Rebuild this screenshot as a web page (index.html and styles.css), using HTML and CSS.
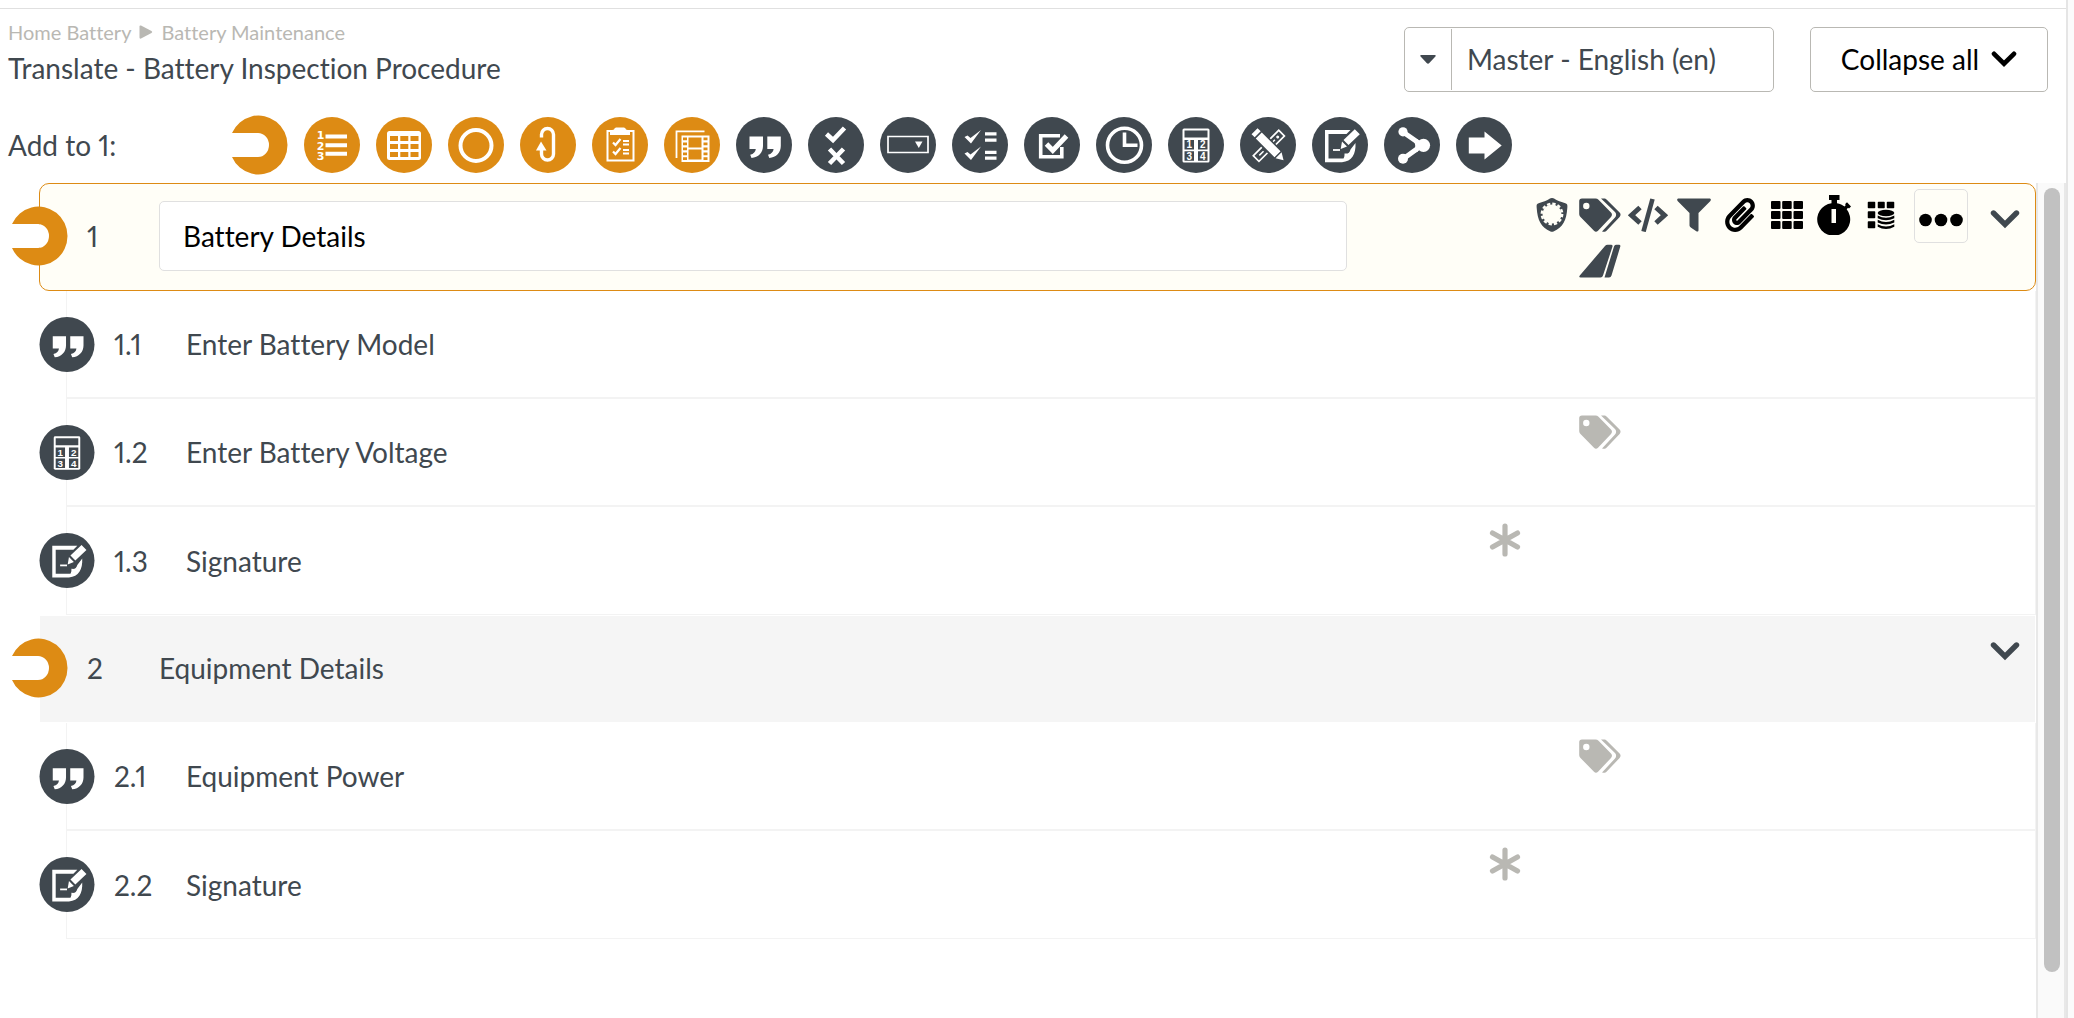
FILE: index.html
```html
<!DOCTYPE html>
<html lang="en">
<head>
<meta charset="utf-8">
<meta name="viewport" content="width=device-width, initial-scale=1">
<title>Translate - Battery Inspection Procedure</title>
<link rel="stylesheet" href="styles.css">
</head>
<body>
<svg class="sprite" aria-hidden="true">
  <symbol id="hook" viewBox="0 0 56 60">
    <path fill="#fff" d="M0 18H26a11 12 0 0 1 0 24H0z"/>
    <path fill="#dd8b14" d="M0 18A29 29.500 0 1 1 0 42H26a11 12 0 0 0 0-24z"/>
  </symbol>
  <symbol id="numbered" viewBox="0 0 56 56">
    <circle cx="28" cy="28" r="28" fill="#dd8b14"/>
    <g fill="#fff"><path d="M21.500 17.500h21.500v4H21.500zM21.500 26.200h21.500v4H21.500zM21.500 34.800h21.500v4H21.500z"/>
    <g font-family="DejaVu Sans" font-weight="700" font-size="11" text-anchor="middle"><text x="16.500" y="22">1</text><text x="16.500" y="32.500">2</text><text x="16.500" y="43">3</text></g></g>
  </symbol>
  <symbol id="table" viewBox="0 0 56 56">
    <circle cx="28" cy="28" r="28" fill="#dd8b14"/>
    <rect x="11" y="14" width="34" height="29" rx="2.500" fill="#fff"/>
    <path fill="#dd8b14" d="M14 19h8v5h-8zM24.300 19h8v5h-8zM34.500 19h8v5h-8zM14 27h8v5h-8zM24.300 27h8v5h-8zM34.500 27h8v5h-8zM14 35h8v5h-8zM24.300 35h8v5h-8zM34.500 35h8v5h-8z"/>
  </symbol>
  <symbol id="ring" viewBox="0 0 56 56">
    <circle cx="28" cy="28" r="28" fill="#dd8b14"/>
    <circle cx="28" cy="28.500" r="15.500" fill="none" stroke="#fff" stroke-width="4"/>
  </symbol>
  <symbol id="loop" viewBox="0 0 56 56">
    <circle cx="28" cy="28" r="28" fill="#dd8b14"/>
    <path fill="none" stroke="#fff" stroke-width="3.400" d="M21.500 20.500V17.500a6 6 0 0 1 12 0V37a6 6 0 0 1-12 0V32"/>
    <path fill="#fff" d="M16 33.500l5-9 5.500 9z"/>
  </symbol>
  <symbol id="clipboard" viewBox="0 0 56 56">
    <circle cx="28" cy="28" r="28" fill="#dd8b14"/>
    <path fill="none" stroke="#fff" stroke-width="2" d="M15.500 14h26v29.500h-26z"/>
    <path fill="#fff" d="M18 18v-4.500c1.500-.5 3-.5 4-1 .5-1.500 1.500-2 3-2h6c1.500 0 2.500.5 3 2 1 .5 2.500.5 4 1V18z"/>
    <path fill="none" stroke="#fff" stroke-width="2.200" d="M21 25.500l2.500 2.500 5-6M21 34.500l2.500 2.500 5-6"/>
    <path stroke="#fff" stroke-width="1.800" d="M31 24h6M31 27.500h6M31 33h6M31 36.500h6"/>
  </symbol>
  <symbol id="film" viewBox="0 0 56 56">
    <circle cx="28" cy="28" r="28" fill="#dd8b14"/>
    <path fill="none" stroke="#fff" stroke-width="1.800" d="M12.500 41V14.300H40.500"/>
    <path fill="#fff" d="M17.500 18.500h28V45h-28z"/>
    <path fill="#dd8b14" d="M24.500 20.500h13v10h-13zM24.500 32.500h13v10h-13zM19 20.500h4v2.800h-4zM19 25.500h4v2.800h-4zM19 30.500h4v2.800h-4zM19 35.500h4v2.800h-4zM19 40.300h4v2.800h-4zM39.500 20.500h4v2.800h-4zM39.500 25.500h4v2.800h-4zM39.500 30.500h4v2.800h-4zM39.500 35.500h4v2.800h-4zM39.500 40.300h4v2.800h-4z"/>
  </symbol>
  <symbol id="quote" viewBox="0 0 56 56">
    <circle cx="28" cy="28" r="28" fill="#40484f"/>
    <path fill="#fff" d="M13.500 19.500H27V29c0 6.500-4.500 11.500-11.500 12l-1.300-3.300c3.500-.7 5.300-3 5.600-5.700H13.500zM31.300 19.500h13.500V29c0 6.500-4.500 11.500-11.500 12L32 37.700c3.500-.7 5.300-3 5.600-5.700H31.300z"/>
  </symbol>
  <symbol id="yesno" viewBox="0 0 56 56">
    <circle cx="28" cy="28" r="28" fill="#40484f"/>
    <path fill="none" stroke="#fff" stroke-width="4.600" d="M18.500 17l6.500 6L36.500 11M21.500 32L35.500 46.500M35.500 32L21.500 46.500"/>
  </symbol>
  <symbol id="dropdown" viewBox="0 0 56 56">
    <circle cx="28" cy="28" r="28" fill="#40484f"/>
    <path fill="none" stroke="#fff" stroke-width="1.700" d="M8 19.500h40v16H8z"/>
    <path fill="#fff" d="M35 24.500h7.500L38.800 31z"/>
  </symbol>
  <symbol id="checklist" viewBox="0 0 56 56">
    <circle cx="28" cy="28" r="28" fill="#40484f"/>
    <path fill="#fff" d="M12.500 20l3-1.500 3 2.500L29 13 19 26.500zM12.500 36.500l3-1.500 3 2.500L29 29.500 19 43z"/>
    <path fill="#fff" d="M33 15.300h11.500v3.200H33zM33 21.500h11.500v3.200H33zM33 33.700h11.500v3.200H33zM33 39.500h11.500v3.200H33z"/>
  </symbol>
  <symbol id="checkbox" viewBox="0 0 56 56">
    <circle cx="28" cy="28" r="28" fill="#40484f"/>
    <path fill="none" stroke="#fff" stroke-width="3.600" d="M36 18.700H16.700V39.700H37.800V30"/>
    <path fill="none" stroke="#fff" stroke-width="5" d="M22.500 27l6.300 6.500L42.500 19"/>
  </symbol>
  <symbol id="clock" viewBox="0 0 56 56">
    <circle cx="28" cy="28" r="28" fill="#40484f"/>
    <circle cx="28.500" cy="28.300" r="17" fill="none" stroke="#fff" stroke-width="3.600"/>
    <path fill="none" stroke="#fff" stroke-width="3.600" d="M28.500 15.500V28.300H41.500"/>
  </symbol>
  <symbol id="calc" viewBox="0 0 56 56">
    <circle cx="28" cy="28" r="28" fill="#40484f"/>
    <rect x="14.500" y="11.500" width="27" height="34" rx="1.500" fill="#fff"/>
    <path fill="#40484f" d="M16.500 13.500h23v7h-23zM16.500 23h9.500v9.500h-9.500zM30 23h9.500v9.500H30zM16.500 34.200h9.500v9.500h-9.500zM30 34.200h9.500v9.500H30z"/>
    <g fill="#fff" font-family="Liberation Sans" font-weight="700" font-size="10" text-anchor="middle"><text x="21.200" y="31.400">1</text><text x="34.800" y="31.400">2</text><text x="21.200" y="42.600">3</text><text x="34.800" y="42.600">4</text></g>
  </symbol>
  <symbol id="tools" viewBox="0 0 56 56">
    <circle cx="28" cy="28" r="28" fill="#40484f"/>
    <g transform="rotate(45 28.500 28.500)">
      <path fill="none" stroke="#fff" stroke-width="1.700" d="M25 10.500h8v36h-8z"/>
      <circle cx="29" cy="16" r="1.500" fill="#fff"/>
      <path stroke="#fff" stroke-width="1.500" d="M29 20v3M29 36v6"/>
    </g>
    <g transform="rotate(-45 28.500 28.500)">
      <path fill="#40484f" d="M22.500 9h12v38l-6 5-6-5z"/>
      <path fill="#fff" d="M24.500 8.500h8.500v4.500h-8.500zM24.500 14.500h8.500V41h-8.500zM24.500 42.500h8.500l-4.200 7z"/>
    </g>
  </symbol>
  <symbol id="sign" viewBox="0 0 56 56">
    <circle cx="28" cy="28" r="28" fill="#40484f"/>
    <path fill="#fff" fill-rule="evenodd" d="M13 13H38.500L34.500 17H16.500V41.500H31.500c1-1.500 1-3 1-5 3.500.5 5-.5 6-4L43.500 26C44 37 40 44.500 30 45.200H13z"/>
    <path fill="#fff" d="M42.800 12.200l5 5L36.500 28l-5-5zM30 24.500l5 5-6.300 2.500z"/>
    <path stroke="#fff" stroke-width="1.800" d="M21 33h7"/>
  </symbol>
  <symbol id="branch" viewBox="0 0 56 56">
    <circle cx="28" cy="28" r="28" fill="#40484f"/>
    <path fill="none" stroke="#fff" stroke-width="5" d="M19 15L38 28.300 19 42"/>
    <path fill="#fff" d="M26 20l8 2.500v12L26 37.500c7-6 7-11 0-17.500z"/>
    <g fill="#fff"><circle cx="19" cy="14.800" r="4.600"/><circle cx="19" cy="41.800" r="5"/><circle cx="39.500" cy="28.300" r="6.600"/></g>
  </symbol>
  <symbol id="goto" viewBox="0 0 56 56">
    <circle cx="28" cy="28" r="28" fill="#40484f"/>
    <path fill="#fff" d="M12.800 20.500h15.700v-6L45.700 28.500 28.500 42.500v-6H12.800z"/>
  </symbol>

  <symbol id="shield" viewBox="0 0 32 34">
    <path fill="#40484f" d="M16 0c2 0 3 1.500 5 2.300 3 1.400 6.500 2 9 3.200 1.500.8 1.500 2 1.300 4.500C30.500 22 27 29.500 17.500 33.500q-1.500.6-3 0C5 29.500 1.500 22 .7 10 .5 7.500.5 6.300 2 5.500c2.500-1.200 6-1.800 9-3.200C13 1.500 14 0 16 0z"/>
    <circle cx="16" cy="16" r="9.500" fill="#fffef7"/>
    <circle cx="16" cy="16" r="10.200" fill="none" stroke="#fffef7" stroke-width="2.400" stroke-dasharray="3.300 2.040"/>
  </symbol>
  <symbol id="tags" viewBox="0 0 42 34">
    <path fill="currentColor" fill-rule="evenodd" d="M3 0.500H16.500c1.200 0 2.200.4 3 1.200L32 14.600c1.300 1.400 1.300 3 0 4.400L19 32.700c-1.300 1.300-2.700 1.300-4 0L1.500 19C.6 18 .2 17 .2 15.800V3.300A2.800 2.800 0 0 1 3 .5zM7.300 4.800a3.200 3.200 0 1 0 0 6.400 3.200 3.200 0 0 0 0-6.400z"/>
    <path fill="currentColor" d="M22 .5h3c1.200 0 2 .4 2.800 1.200L40.600 14.600c1.300 1.400 1.300 3 0 4.400L27.500 32.700c-1 1-2 1.200-4.500.8L36 19.500c1.500-1.700 1.500-3.800 0-5.500z"/>
  </symbol>
  <symbol id="code" viewBox="0 0 42 34">
    <path fill="none" stroke="#40484f" stroke-width="5" d="M13 9.500L4.500 17.200 13 25M29 9.500L37.500 17.200 29 25"/>
    <path stroke="#40484f" stroke-width="4.600" d="M25.500 1L16.500 33.500"/>
  </symbol>
  <symbol id="filter" viewBox="0 0 34 34">
    <path fill="#40484f" d="M1.500.5h31c1.300 0 1.800 1.500.9 2.400L21.500 15v17c0 1.500-1 2-2.200 1.200l-5.500-3.700c-.8-.6-1.300-1.200-1.300-2V15L.6 2.900C-.3 2 .2.500 1.500.5z"/>
  </symbol>
  <symbol id="clip" viewBox="0 0 448 512">
    <path d="M43.246 466.142c-58.430-60.289-57.341-157.511 1.386-217.581L254.392 34c44.316-45.332 116.351-45.336 160.671 0 43.890 44.894 43.943 117.329 0 162.276L232.214 383.128c-29.855 30.537-78.633 30.111-107.982-.998-28.275-29.970-27.368-77.473 1.452-106.953l143.743-146.835c6.182-6.314 16.312-6.422 22.626-.241l22.861 22.379c6.315 6.182 6.422 16.312.241 22.626L171.427 319.927c-4.932 5.045-5.236 13.428-.648 18.292 4.372 4.634 11.245 4.711 15.688.165l182.849-186.851c19.613-20.062 19.613-52.725-.011-72.798-19.189-19.627-49.957-19.637-69.154 0L90.390 293.295c-34.763 35.560-35.299 93.120-1.191 128.313 34.010 35.093 88.985 35.137 123.058.286l172.060-175.999c6.177-6.319 16.307-6.433 22.626-.256l22.877 22.364c6.319 6.177 6.434 16.307.256 22.626l-172.060 175.998c-59.576 60.938-155.943 60.216-214.770-.485z"/>
  </symbol>
  <symbol id="grid" viewBox="0 0 34 30">
    <path stroke="#000" stroke-width="2" stroke-linejoin="round" d="M2 2h7.500v6H2zM13.200 2h7.500v6h-7.500zM24.500 2h7.500v6h-7.500zM2 12h7.500v6H2zM13.200 12h7.500v6h-7.500zM24.500 12h7.500v6h-7.500zM2 22h7.500v6H2zM13.200 22h7.500v6h-7.500zM24.500 22h7.500v6h-7.500z"/>
  </symbol>
  <symbol id="stopwatch" viewBox="0 0 34 40">
    <path fill-rule="evenodd" d="M12 0h10.500v5H20v3.200c3 .5 5.500 1.600 7.500 3.300l1.300-1.400-.8-.8 2-2L34 11.500l-2 2-1-.7-1.300 1.500A16.500 16.300 0 1 1 14.500 8.200V5H12zM14.500 14v14h4.500V14z"/>
  </symbol>
  <symbol id="griddata" viewBox="0 0 28 28">
    <path stroke="#000" stroke-width="1.500" stroke-linejoin="round" d="M1.500 1.500h6v5h-6zM11.500 1.500h5.500v5h-5.500zM20.500 1.500h6v5h-6zM1.500 11h6v5.500h-6zM1.500 21h6v5.500h-6z"/>
    <ellipse cx="19" cy="12" rx="8.300" ry="3.200"/>
    <path d="M10.700 14.500q8.300 4.500 16.600 0v2.800q-8.300 4-16.600 0zM10.700 18.800q8.300 4.500 16.600 0v2.800q-8.300 4-16.600 0zM10.700 23.200q8.300 4.500 16.600 0v2.600q-8.300 4.500-16.600 0z"/>
  </symbol>
  <symbol id="fin" viewBox="0 0 42 34">
    <path fill="#40484f" d="M28.500.8H32q2 0 1.500 1.800L24 31.500q-.6 2-2.500 2H1.800q-2.500 0-1-2L26 2Q27 .8 28.500.8zM37 .8h3q1.800 0 1.300 1.800L32.500 31.500q-.6 2-2.500 2H25.500L35 2.500Q35.500.8 37 .8z"/>
  </symbol>
  <symbol id="asterisk" viewBox="0 0 32 34">
    <path fill="none" stroke="#b9b8b3" stroke-width="5.200" stroke-linecap="round" d="M16 3V31M3.500 10L28.500 24M28.500 10L3.500 24"/>
  </symbol>
  <symbol id="dots" viewBox="0 0 44 14">
    <circle cx="6.500" cy="7" r="6.300"/><circle cx="22" cy="7" r="6.300"/><circle cx="37.500" cy="7" r="6.300"/>
  </symbol>
  <symbol id="chevron" viewBox="0 0 30 20">
    <path fill="none" stroke="currentColor" stroke-width="5.400" stroke-linecap="round" d="M3.500 4L15 15.500 26.500 4"/>
  </symbol>
</svg>

<div class="page">
  <header class="header">
    <div class="heading">
      <nav class="crumbs" aria-label="Breadcrumb">
        <a href="#">Home Battery</a>
        <svg class="crumb-arrow" viewBox="0 0 13 14" aria-hidden="true"><path fill="#b9b8b3" d="M0 1.500Q0 0 1.500.5L12 6Q13.500 7 12 8L1.500 13.500Q0 14 0 12.500z"/></svg>
        <a href="#">Battery Maintenance</a>
      </nav>
      <h1 class="title">Translate - Battery Inspection Procedure</h1>
    </div>
    <div class="controls">
      <div class="language">
        <svg class="caret" viewBox="0 0 18 10" aria-hidden="true"><path fill="#40484f" d="M1.500 0h15q2 0 .8 1.700L10.500 9q-1.500 1.500-3 0L.7 1.700Q-.5 0 1.500 0z"/></svg>
        <select class="language-select" aria-label="Language"><option>Master - English (en)</option></select>
      </div>
      <button class="collapse" type="button">Collapse all <svg class="collapse-icon" aria-hidden="true"><use href="#chevron"/></svg></button>
    </div>
  </header>

  <div class="toolbar">
    <span class="toolbar-label">Add to 1:</span>
    <button class="tool" type="button" aria-label="Group"><svg><use href="#hook"/></svg></button>
    <button class="tool" type="button" aria-label="Numbered list"><svg><use href="#numbered"/></svg></button>
    <button class="tool" type="button" aria-label="Table"><svg><use href="#table"/></svg></button>
    <button class="tool" type="button" aria-label="Circle"><svg><use href="#ring"/></svg></button>
    <button class="tool" type="button" aria-label="Loop"><svg><use href="#loop"/></svg></button>
    <button class="tool" type="button" aria-label="Clipboard"><svg><use href="#clipboard"/></svg></button>
    <button class="tool" type="button" aria-label="Media"><svg><use href="#film"/></svg></button>
    <button class="tool" type="button" aria-label="Text"><svg><use href="#quote"/></svg></button>
    <button class="tool" type="button" aria-label="Yes or no"><svg><use href="#yesno"/></svg></button>
    <button class="tool" type="button" aria-label="Drop-down"><svg><use href="#dropdown"/></svg></button>
    <button class="tool" type="button" aria-label="Checklist"><svg><use href="#checklist"/></svg></button>
    <button class="tool" type="button" aria-label="Checkbox"><svg><use href="#checkbox"/></svg></button>
    <button class="tool" type="button" aria-label="Time"><svg><use href="#clock"/></svg></button>
    <button class="tool" type="button" aria-label="Number"><svg><use href="#calc"/></svg></button>
    <button class="tool" type="button" aria-label="Drawing"><svg><use href="#tools"/></svg></button>
    <button class="tool" type="button" aria-label="Signature"><svg><use href="#sign"/></svg></button>
    <button class="tool" type="button" aria-label="Branch"><svg><use href="#branch"/></svg></button>
    <button class="tool" type="button" aria-label="Go to"><svg><use href="#goto"/></svg></button>
  </div>

  <div class="body">
    <main class="tree">
      <section class="group">
        <div class="row head selected">
          <svg class="type"><use href="#hook"/></svg>
          <span class="number">1</span>
          <input class="name-input" type="text" aria-label="Step name" value="Battery Details">
          <div class="flags">
            <svg class="flag shield"><use href="#shield"/></svg>
            <svg class="flag wide tags"><use href="#tags"/></svg>
            <svg class="flag wide"><use href="#code"/></svg>
            <svg class="flag"><use href="#filter"/></svg>
            <svg class="flag"><use href="#clip"/></svg>
            <svg class="flag"><use href="#grid"/></svg>
            <svg class="flag tall"><use href="#stopwatch"/></svg>
            <svg class="flag small"><use href="#griddata"/></svg>
            <svg class="flag wide fin"><use href="#fin"/></svg>
          </div>
          <button class="menu" type="button" aria-label="More actions"><svg><use href="#dots"/></svg></button>
          <button class="toggle" type="button" aria-label="Collapse"><svg><use href="#chevron"/></svg></button>
        </div>
        <ul class="items">
          <li class="row">
            <svg class="type"><use href="#quote"/></svg>
            <span class="number">1.1</span>
            <span class="name">Enter Battery Model</span>
          </li>
          <li class="row">
            <svg class="type"><use href="#calc"/></svg>
            <span class="number">1.2</span>
            <span class="name">Enter Battery Voltage</span>
            <div class="flags"><svg class="flag wide tags muted"><use href="#tags"/></svg></div>
          </li>
          <li class="row">
            <svg class="type"><use href="#sign"/></svg>
            <span class="number">1.3</span>
            <span class="name">Signature</span>
            <div class="flags"><svg class="flag asterisk"><use href="#asterisk"/></svg></div>
          </li>
        </ul>
      </section>
      <section class="group">
        <div class="row head shaded">
          <svg class="type"><use href="#hook"/></svg>
          <span class="number">2</span>
          <span class="name">Equipment Details</span>
          <button class="toggle" type="button" aria-label="Collapse"><svg><use href="#chevron"/></svg></button>
        </div>
        <ul class="items">
          <li class="row">
            <svg class="type"><use href="#quote"/></svg>
            <span class="number">2.1</span>
            <span class="name">Equipment Power</span>
            <div class="flags"><svg class="flag wide tags muted"><use href="#tags"/></svg></div>
          </li>
          <li class="row">
            <svg class="type"><use href="#sign"/></svg>
            <span class="number">2.2</span>
            <span class="name">Signature</span>
            <div class="flags"><svg class="flag asterisk"><use href="#asterisk"/></svg></div>
          </li>
        </ul>
      </section>
    </main>
    <div class="scrollbar" aria-hidden="true"><div class="thumb"></div></div>
  </div>
</div>
</body>
</html>
```

FILE: styles.css
```css
* {
  box-sizing: border-box;
}

body {
  margin: 0;
  background: #fbfbfb;
  color: #40484f;
  font: 28px/36px Lato, "Liberation Sans", sans-serif;
  font-variant-ligatures: none;
  font-variant-numeric: proportional-nums;
}

svg {
  display: block;
}

button {
  margin: 0;
  padding: 0;
  border: 0;
  background: none;
  color: inherit;
  font: inherit;
  cursor: pointer;
}

.sprite {
  display: none;
}

.page {
  display: flex;
  flex-direction: column;
  min-height: 100vh;
  margin-right: 6px;
  padding-top: 8px;
  border-right: 2px solid #e5e5e5;
  background: #fff;
}

/* Header */

.header {
  display: flex;
  justify-content: space-between;
  align-items: flex-start;
  padding: 11px 18px 0 8px;
  border-top: 1px solid #e0e0e0;
}

.crumbs {
  display: flex;
  align-items: center;
  gap: 8px;
  font-size: 20px;
  line-height: 24px;
}

.crumbs a {
  color: #b9b8b3;
  text-decoration: none;
}

.crumb-arrow {
  width: 14px;
  height: 14px;
}

.title {
  margin: 6px 0 0;
  font-size: 28px;
  font-weight: 400;
  line-height: 36px;
}

.controls {
  display: flex;
  gap: 36px;
  padding-top: 7px;
}

.language,
.collapse {
  height: 65px;
  border: 1px solid #b9b8b3;
  border-radius: 5px;
  background: #fff;
}

.language {
  display: flex;
  align-items: center;
  width: 370px;
}

.caret {
  flex: none;
  width: 16px;
  height: 9px;
  margin: 0 15px;
}

.language-select {
  flex: 1;
  align-self: stretch;
  margin: 1px 0;
  padding: 0 15px 2px;
  border: 0;
  border-left: 1px solid #b9b8b3;
  background: none;
  color: inherit;
  font: inherit;
  appearance: none;
}

.collapse {
  display: flex;
  justify-content: center;
  align-items: center;
  gap: 12px;
  width: 238px;
  padding-bottom: 2px;
  color: #000;
}

.collapse-icon {
  width: 26px;
  height: 18px;
}

/* Step type toolbar */

.toolbar {
  display: flex;
  align-items: center;
  gap: 16px;
  height: 91px;
  padding: 14px 0 0 8px;
}

.toolbar-label {
  width: 208px;
}

.tool svg {
  width: 56px;
  height: 60px;
}

/* Step tree */

.body {
  display: flex;
  flex: 1;
}

.tree {
  flex: 1;
  padding-left: 39px;
}

.row {
  display: flex;
  align-items: center;
  height: 108px;
  padding-right: 15px;
}

.head {
  padding-bottom: 2px;
  border: 1px solid #fff;
}

.selected {
  border-color: #dd8b14;
  border-radius: 10px;
  background: #fffef7;
}

.shaded {
  background: #f5f5f5;
}

.type {
  flex: none;
  width: 56px;
  height: 60px;
  margin: 0 19px 0 -28px;
}

.number {
  flex: none;
  width: 72px;
}

.name {
  flex: 1;
}

.name-input {
  flex: 1;
  min-width: 0;
  height: 70px;
  margin-right: 134px;
  padding: 0 23px;
  border: 1px solid #e0e0e0;
  border-radius: 5px;
  background: #fff;
  color: #000;
  font: inherit;
}

.items {
  margin: 0 0 0 27px;
  padding: 0;
  border: solid #f3f3f3;
  border-width: 0 1px;
  list-style: none;
}

.items .row {
  border-bottom: 2px solid #f3f3f3;
}

.items .row:last-child {
  border-bottom-width: 1px;
}

.items .flags {
  margin-right: 116px;
  padding-top: 10px;
}

.items .type {
  height: 55px;
}

.flags {
  display: grid;
  flex: none;
  grid-template-columns: 47px 47px 49px 47px 45px 47px 47px 47px 47px;
  grid-auto-rows: 46px;
  align-self: flex-start;
  align-items: center;
  justify-items: center;
  margin-right: 10px;
  padding-top: 8px;
}

.flag {
  width: 34px;
  height: 34px;
}

.flag.wide {
  width: 42px;
}

.flag.tall {
  height: 40px;
}

.flag.small {
  width: 28px;
}

.asterisk {
  grid-column: 1;
}

.shield {
  grid-column: 2;
}

.tags,
.fin {
  grid-column: 3;
}

.muted {
  color: #b9b8b3;
}

.menu {
  display: flex;
  flex: none;
  align-items: center;
  align-self: flex-start;
  justify-content: center;
  width: 54px;
  height: 54px;
  margin: 5px 22px 0 0;
  border: 1px solid #e0e0e0;
  border-radius: 5px;
}

.menu svg {
  width: 44px;
  height: 14px;
  margin-top: 8px;
}

.toggle {
  align-self: flex-start;
  padding-top: 25px;
}

.toggle svg {
  width: 30px;
  height: 20px;
}

/* Scroll track */

.scrollbar {
  flex: none;
  width: 30px;
  padding: 5px 4px 46px 6px;
  border: solid #e8e8e8;
  border-width: 0 2px;
  background: #fafafa;
}

.thumb {
  width: 16px;
  height: 100%;
  border-radius: 8px;
  background: #c1c1c1;
}
```
